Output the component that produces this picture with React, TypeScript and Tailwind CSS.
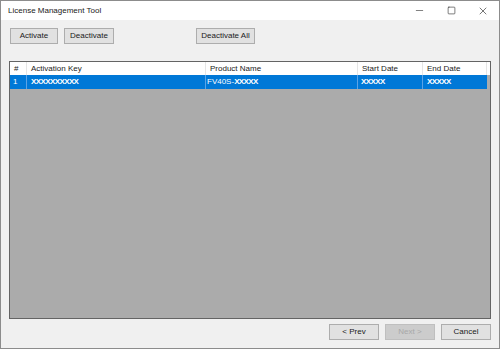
import { Minus, Square, X } from 'lucide-react';

type Column = {
    id: string;
    label: string;
    width: string;
};

const columns: Column[] = [
    { id: 'num', label: '#', width: 'w-[17px]' },
    { id: 'key', label: 'Activation Key', width: 'w-[179px]' },
    { id: 'product', label: 'Product Name', width: 'w-[152px]' },
    { id: 'start', label: 'Start Date', width: 'w-[65px]' },
    { id: 'end', label: 'End Date', width: 'w-[64px]' },
];

function WinButton({
    label,
    className = '',
    disabled = false,
}: {
    label: string;
    className?: string;
    disabled?: boolean;
}) {
    return (
        <button
            disabled={disabled}
            className={`flex h-[16px] items-center justify-center whitespace-nowrap border text-[8px] leading-none ${
                disabled
                    ? 'border-[#bfbfbf] bg-[#cccccc] text-[#a8a8a8]'
                    : 'border-[#adadad] bg-[#e1e1e1] text-[#1a1a1a]'
            } ${className}`}
        >
            {label}
        </button>
    );
}

export default function App() {
    return (
        <div
            className="flex h-[349px] w-[500px] flex-col border border-[#8c8c8c] bg-[#f0f0f0] text-[#1a1a1a]"
            style={{ fontFamily: '"Liberation Sans", Arial, sans-serif' }}
        >
            {/* Title bar */}
            <div className="flex h-[19px] items-center justify-between bg-white pl-[7px]">
                <span className="text-[8px]">License Management Tool</span>
                <div className="flex h-full items-center">
                    <div className="flex w-[32px] justify-center">
                        <Minus className="h-[11px] w-[11px]" strokeWidth={1.2} />
                    </div>
                    <div className="flex w-[32px] justify-center">
                        <Square className="h-[9px] w-[9px]" strokeWidth={1.5} />
                    </div>
                    <div className="flex w-[32px] justify-center">
                        <X className="h-[12px] w-[12px]" strokeWidth={1.2} />
                    </div>
                </div>
            </div>

            {/* Toolbar */}
            <div className="flex items-center pl-[9px] pt-[8px]">
                <WinButton label="Activate" className="w-[48px]" />
                <WinButton label="Deactivate" className="ml-[6px] w-[50px]" />
                <WinButton label="Deactivate All" className="ml-[82px] w-[59px]" />
            </div>

            {/* List view */}
            <div className="mx-[8px] mt-[17px] flex flex-1 flex-col border border-[#646464] bg-[#ababab]">
                <div className="flex h-[13px] bg-white text-[8px]">
                    {columns.map((col) => (
                        <div
                            key={col.id}
                            className={`${col.width} flex items-center border-r border-[#e5e5e5] pl-[4px]`}
                        >
                            {col.label}
                        </div>
                    ))}
                    <div className="flex-1 bg-white" />
                </div>
                <div className="flex h-[14px] text-[8px] text-white">
                    <div className="flex w-[17px] items-center border-r border-[#5ca3e6] bg-[#0078d7] pl-[3px]">
                        1
                    </div>
                    <div className="flex w-[179px] items-center border-r border-[#5ca3e6] bg-[#0078d7] pl-[4px] font-bold tracking-[-0.6px]">
                        XXXXXXXXXX
                    </div>
                    <div className="flex w-[152px] items-center border-r border-[#5ca3e6] bg-[#0078d7] pl-[1px]">
                        FV40S-
                        <span className="font-bold tracking-[-0.6px]">XXXXX</span>
                    </div>
                    <div className="flex w-[65px] items-center border-r border-[#5ca3e6] bg-[#0078d7] pl-[3px] font-bold tracking-[-0.6px]">
                        XXXXX
                    </div>
                    <div className="flex w-[64px] items-center bg-[#0078d7] pl-[4px] font-bold tracking-[-0.6px]">
                        XXXXX
                    </div>
                </div>
                <div className="flex-1" />
            </div>

            {/* Bottom buttons */}
            <div className="flex justify-end gap-[6px] pb-[8px] pr-[8px] pt-[5px]">
                <WinButton label="< Prev" className="w-[50px]" />
                <WinButton label="Next >" className="w-[50px]" disabled />
                <WinButton label="Cancel" className="w-[50px]" />
            </div>
        </div>
    );
}
